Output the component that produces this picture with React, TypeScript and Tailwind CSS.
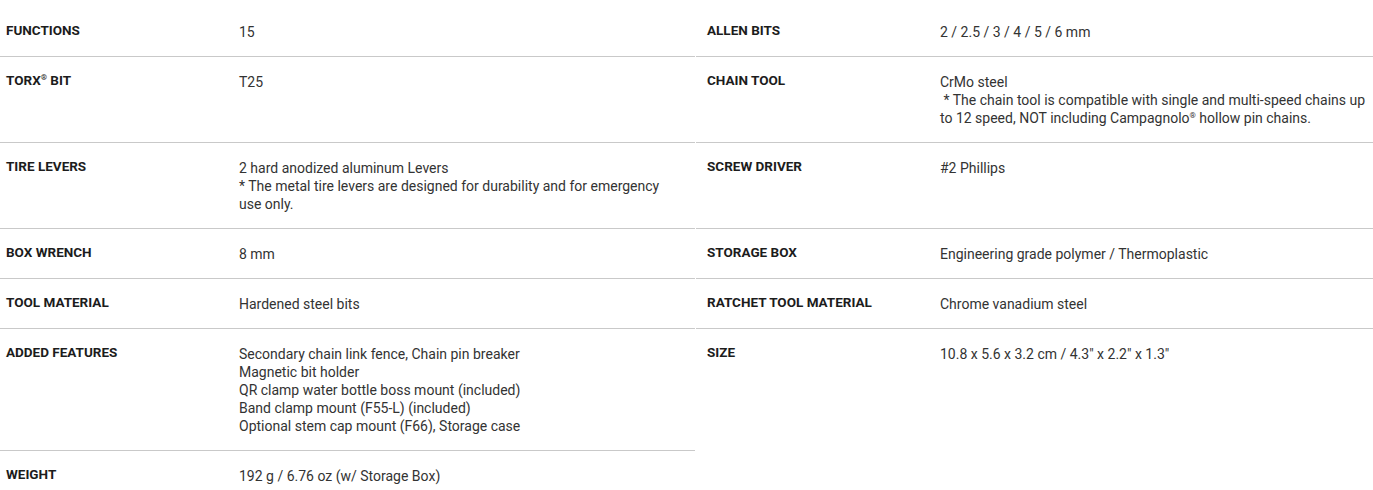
const Reg = () => <span className="text-[8px] leading-none relative -top-[5px]">®</span>;

const specs: { label: React.ReactNode; value: React.ReactNode }[] = [
  { label: "FUNCTIONS", value: "15" },
  { label: "ALLEN BITS", value: "2 / 2.5 / 3 / 4 / 5 / 6 mm" },
  {
    label: (
      <>
        TORX<Reg /> BIT
      </>
    ),
    value: "T25",
  },
  {
    label: "CHAIN TOOL",
    value: (
      <>
        CrMo steel
        <br />
        &nbsp;* The chain tool is compatible with single and multi-speed chains up to 12 speed, NOT including Campagnolo
        <Reg /> hollow pin chains.
      </>
    ),
  },
  {
    label: "TIRE LEVERS",
    value: (
      <>
        2 hard anodized aluminum Levers
        <br />* The metal tire levers are designed for durability and for emergency use only.
      </>
    ),
  },
  { label: "SCREW DRIVER", value: "#2 Phillips" },
  { label: "BOX WRENCH", value: "8 mm" },
  { label: "STORAGE BOX", value: "Engineering grade polymer / Thermoplastic" },
  { label: "TOOL MATERIAL", value: "Hardened steel bits" },
  { label: "RATCHET TOOL MATERIAL", value: "Chrome vanadium steel" },
  {
    label: "ADDED FEATURES",
    value: (
      <>
        Secondary chain link fence, Chain pin breaker
        <br />
        Magnetic bit holder
        <br />
        QR clamp water bottle boss mount (included)
        <br />
        Band clamp mount (F55-L) (included)
        <br />
        Optional stem cap mount (F66), Storage case
      </>
    ),
  },
  { label: "SIZE", value: '10.8 x 5.6 x 3.2 cm / 4.3" x 2.2" x 1.3"' },
  { label: "WEIGHT", value: "192 g / 6.76 oz (w/ Storage Box)" },
];

function SpecRow(props: { label: React.ReactNode; value: React.ReactNode; index: number }) {
  const right = props.index % 2 == 1;
  const first = props.index < 2;
  return (
    <div
      className={`flex items-start pb-[15px] ${first ? "" : "border-t border-[#c9c9c9]"} ${right ? "pl-[11px]" : "pl-[6px]"}`}
    >
      <div className="w-[233px] shrink-0 pt-[14px] text-[13.5px] leading-[18px] font-bold text-[#1c1c1c]">
        {props.label}
      </div>
      <div className="max-w-[436px] pt-4 text-[14px] leading-[18px] text-[#333]">{props.value}</div>
    </div>
  );
}

export default function App() {
  return (
    <div className="w-[1373px] h-[490px] bg-white overflow-hidden pt-[7px] font-['Roboto',sans-serif]">
      <div className="grid grid-cols-[695px_677px] gap-x-px">
        {specs.map((s, i) => (
          <SpecRow key={i} index={i} label={s.label} value={s.value} />
        ))}
      </div>
    </div>
  );
}
